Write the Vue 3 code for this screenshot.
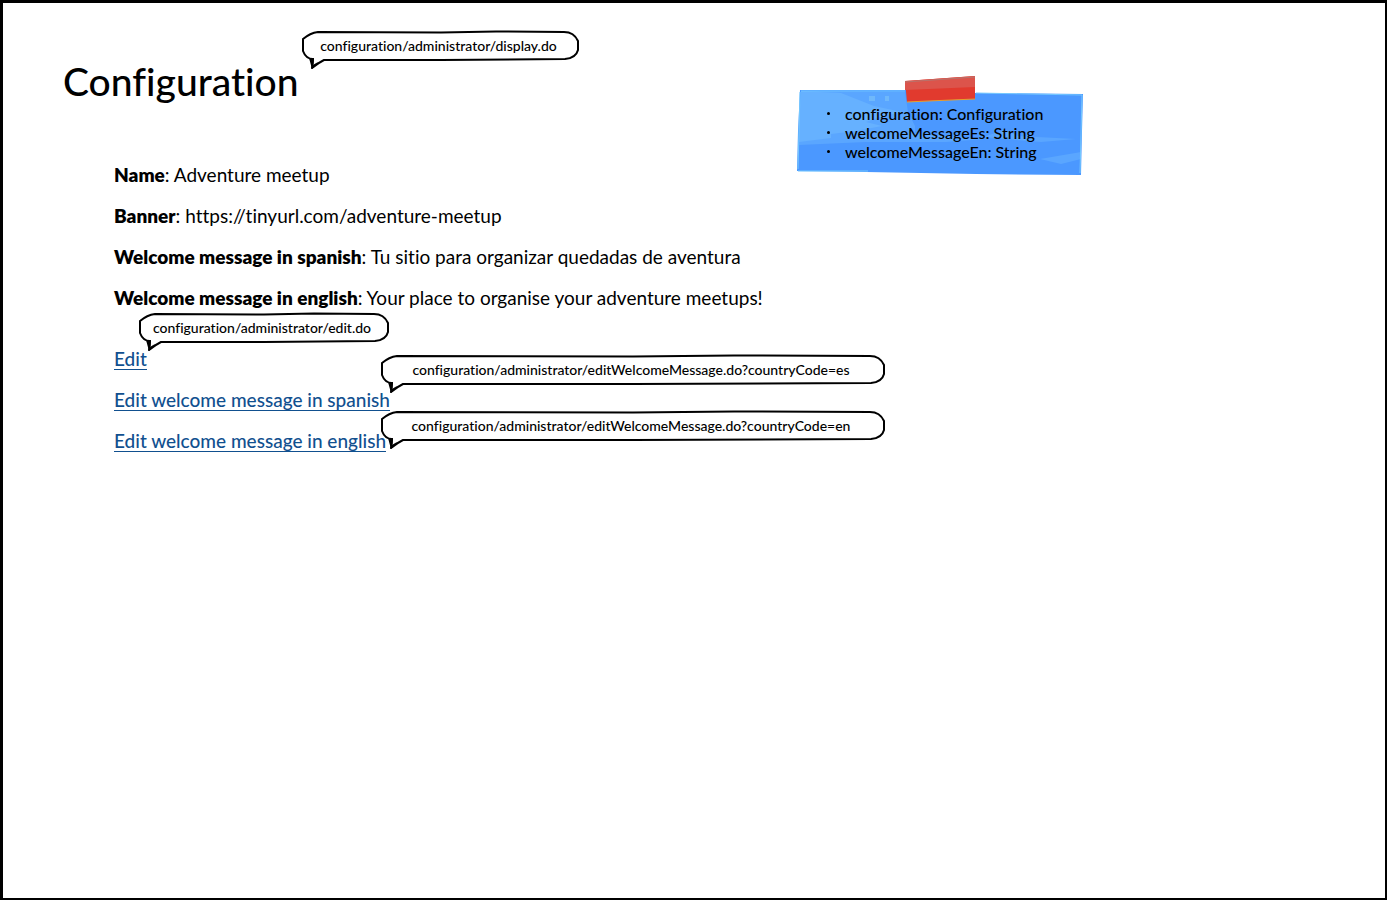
<script setup>
const details = [
  { label: 'Name', value: 'Adventure meetup' },
  { label: 'Banner', value: 'https://tinyurl.com/adventure-meetup' },
  { label: 'Welcome message in spanish', value: 'Tu sitio para organizar quedadas de aventura' },
  { label: 'Welcome message in english', value: 'Your place to organise your adventure meetups!' },
]

const links = ['Edit', 'Edit welcome message in spanish', 'Edit welcome message in english']

const callouts = [
  { id: 'display', width: 279, text: 'configuration/administrator/display.do' },
  { id: 'edit', width: 252, text: 'configuration/administrator/edit.do' },
  { id: 'spanish', width: 506, text: 'configuration/administrator/editWelcomeMessage.do?countryCode=es' },
  { id: 'english', width: 506, text: 'configuration/administrator/editWelcomeMessage.do?countryCode=en' },
]

const attributes = ['configuration: Configuration', 'welcomeMessageEs: String', 'welcomeMessageEn: String']

// Hand-drawn bubble outline; only the straight runs grow with the width.
const bubble = (w) =>
  `M2 10 Q9 4 17 3 L${Math.round(w * 0.5)} 3.5 L${Math.round(w * 0.7)} 2.5 L${w - 16} 3` +
  ` Q${w - 6} 3 ${w - 2} 12 L${w - 2} 21 Q${w - 4} 29 ${w - 15} 30` +
  ` L${Math.round(w * 0.5)} 31 L23 31 Q17 34 11 39 Q12 35 12 30 Q5 30 2 22 Z`
</script>

<template>
  <main class="screen">
    <h1>Configuration</h1>

    <section class="details">
      <p v-for="d in details" :key="d.label"><strong>{{ d.label }}</strong>: {{ d.value }}</p>
    </section>

    <nav class="links">
      <a v-for="l in links" :key="l" href="#">{{ l }}</a>
    </nav>

    <div v-for="c in callouts" :key="c.id" class="callout" :class="c.id" :style="{ width: c.width + 'px' }">
      <svg :viewBox="`0 0 ${c.width} 42`" aria-hidden="true">
        <path :d="bubble(c.width)" />
        <path class="tail" d="M8 29 L13 29 L12 36 L17 33 L11 40 Z" />
      </svg>
      <span>{{ c.text }}</span>
    </div>

    <aside class="note">
      <svg viewBox="0 0 288 100" aria-hidden="true">
        <path fill="#4b98ff" d="M4 14 L110 14 L180 17 L287 18 L286 55 L285 99 L180 98 L70 96 L1 95 L2 55 Z" />
        <path fill="#5aa6ff" d="M5 15 L109 16 L112 36 L119 50 L119 57 L188 63 L150 66 L70 66 L3 69 Z M186 61 L210 54 L222 60 L280 63 L245 66 Z M244 83 L285 76 L285 83 L265 88 Z" />
        <path fill="#66b1ff" d="M5 15 L45 17 L78 30 L106 36 L84 41 L70 46 L86 50 L60 55 L35 58 L35 62 L3 66 L3 42 Z" />
        <path fill="#6fb8fb" d="M73 20 H79 V25 H73 Z M89 20 H93 V25 H89 Z" />
        <path fill="none" stroke="#74c8ff" d="M5 15 H109 M4 16 L2 93 M180 17 L286 19 L284 97 M2 95 L72 95" />
        <path fill="#e13a2e" d="M109 5 L179 0 L179 23 L111 26 Z" />
        <path fill="#dc544b" d="M109 5 L179 0 L179 11 L109 14 Z" />
        <path fill="none" stroke="#e8a02c" d="M111 26 L132 25 L179 23" />
        <path fill="none" stroke="#b7736c" d="M109 6 L179 1" />
      </svg>
      <ul>
        <li v-for="a in attributes" :key="a">{{ a }}</li>
      </ul>
    </aside>
  </main>
</template>

<style>
body {
  background: #fff;
}
</style>

<style scoped>
.screen {
  position: relative;
  box-sizing: border-box;
  min-height: 100vh;
  padding: 54px 60px 40px;
  border: solid #000;
  border-width: 3px 2px 2px 3px;
  color: #000;
  font: 500 19px/24px Lato, "Open Sans", sans-serif;
  font-variant-ligatures: none;
}
h1 {
  margin: 0;
  font-size: 39px;
  line-height: 48px;
  font-weight: 500;
}
.details {
  margin: 58px 0 0 51px;
  font-weight: 400;
}
.details p {
  margin: 0 0 17px;
}
.details strong {
  font-weight: 800;
}
.links {
  display: flex;
  flex-direction: column;
  align-items: flex-start;
  gap: 20px;
  margin: 39px 0 0 51px;
}
.links a {
  line-height: 20px;
  border-bottom: 1px solid #11508f;
  color: #11508f;
  text-decoration: none;
}
.callout {
  position: absolute;
  height: 42px;
  font-size: 14px;
  line-height: 34px;
  text-align: center;
}
.callout svg {
  position: absolute;
  inset: 0;
  width: 100%;
  height: 100%;
  fill: #fff;
  stroke: #000;
  stroke-width: 2;
  stroke-linejoin: round;
}
.callout .tail {
  fill: #000;
  stroke: none;
}
.callout span {
  position: relative;
  padding-right: 4px;
  white-space: nowrap;
}
.display { left: 298px; top: 26px; }
.edit { left: 135px; top: 308px; }
.spanish { left: 377px; top: 350px; }
.english { left: 377px; top: 406px; }
.note {
  position: absolute;
  left: 793px;
  top: 73px;
  width: 288px;
  height: 100px;
}
.note svg {
  position: absolute;
  inset: 0;
  width: 100%;
  height: 100%;
}
.note ul {
  position: relative;
  margin: 0;
  padding: 28px 0 0 31px;
  list-style: none;
  font-size: 16px;
  line-height: 19px;
}
.note li {
  display: flex;
  align-items: center;
  gap: 15px;
}
.note li::before {
  content: "";
  width: 3px;
  height: 3px;
  border-radius: 50%;
  background: #000;
}
</style>
